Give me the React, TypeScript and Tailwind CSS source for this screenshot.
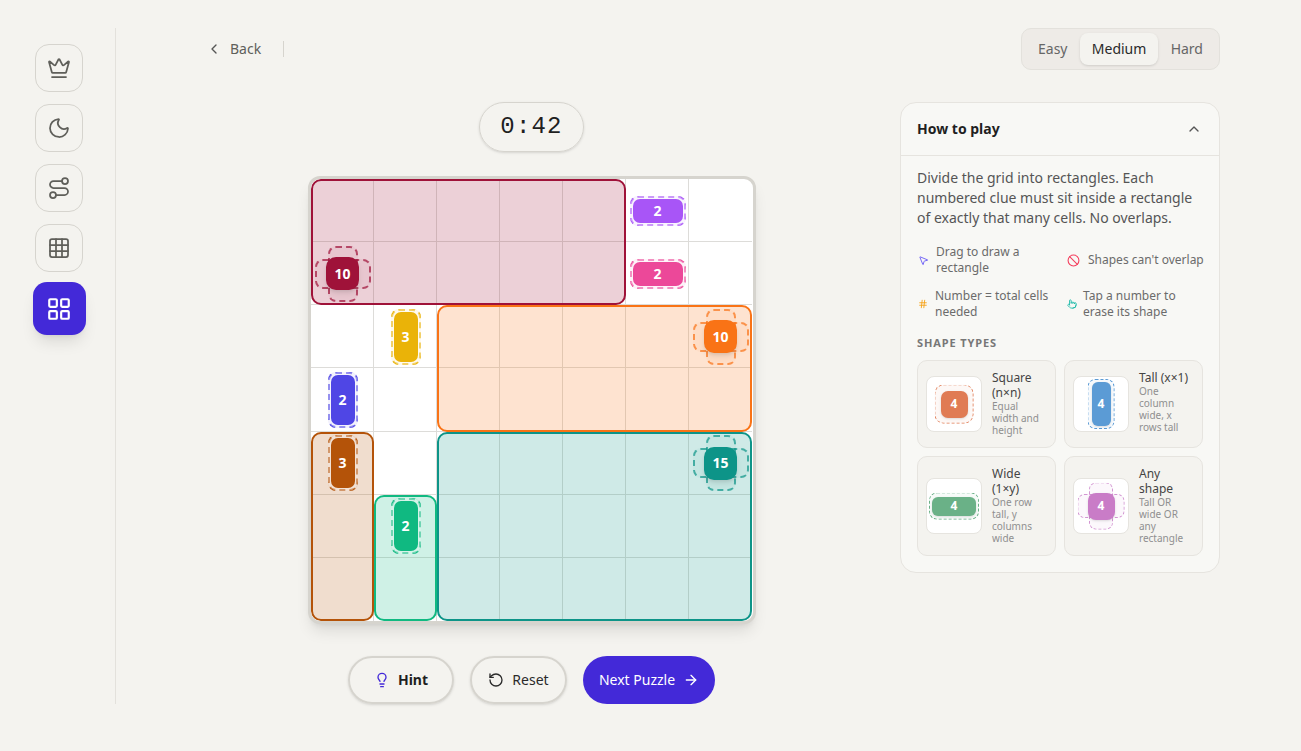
import {
  ArrowRight,
  Ban,
  ChevronLeft,
  ChevronUp,
  Crown,
  Grid3x3,
  Hash,
  LayoutGrid,
  Lightbulb,
  Moon,
  MousePointer2,
  Pointer,
  RotateCcw,
  Route,
} from "lucide-react";

const SIDE_ICONS = [Crown, Moon, Route, Grid3x3];

const REGIONS = [
  { pos: "col-start-1 col-span-5 row-start-1 row-span-2", color: "border-[#9f1239] bg-[#9f1239]/20" },
  { pos: "col-start-3 col-span-5 row-start-3 row-span-2", color: "border-[#f97316] bg-[#f97316]/20" },
  { pos: "col-start-3 col-span-5 row-start-5 row-span-3", color: "border-[#0d9488] bg-[#0d9488]/20" },
  { pos: "col-start-1 col-span-1 row-start-5 row-span-3", color: "border-[#b45309] bg-[#b45309]/20" },
  { pos: "col-start-2 col-span-1 row-start-6 row-span-2", color: "border-[#10b981] bg-[#10b981]/20" },
];

type Clue = {
  n: number;
  pos: string;
  kind: "wide" | "tall" | "any";
  bg: string;
  dash: string;
};

const CLUES: Clue[] = [
  { n: 2, pos: "col-start-6 row-start-1", kind: "wide", bg: "bg-[#a855f7]", dash: "border-[#a855f7] bg-[#a855f7]/10" },
  { n: 2, pos: "col-start-6 row-start-2", kind: "wide", bg: "bg-[#ec4899]", dash: "border-[#ec4899] bg-[#ec4899]/10" },
  { n: 10, pos: "col-start-1 row-start-2", kind: "any", bg: "bg-[#9f1239]", dash: "border-[#9f1239]/70 bg-[#9f1239]/5" },
  { n: 3, pos: "col-start-2 row-start-3", kind: "tall", bg: "bg-[#eab308]", dash: "border-[#eab308] bg-[#eab308]/10" },
  { n: 10, pos: "col-start-7 row-start-3", kind: "any", bg: "bg-[#f97316]", dash: "border-[#f97316]/70 bg-[#f97316]/5" },
  { n: 2, pos: "col-start-1 row-start-4", kind: "tall", bg: "bg-[#4f46e5]", dash: "border-[#4f46e5] bg-[#4f46e5]/10" },
  { n: 3, pos: "col-start-1 row-start-5", kind: "tall", bg: "bg-[#b45309]", dash: "border-[#b45309] bg-[#b45309]/10" },
  { n: 15, pos: "col-start-7 row-start-5", kind: "any", bg: "bg-[#0d9488]", dash: "border-[#0d9488]/70 bg-[#0d9488]/5" },
  { n: 2, pos: "col-start-2 row-start-6", kind: "tall", bg: "bg-[#10b981]", dash: "border-[#10b981] bg-[#10b981]/10" },
];

const CENTER = "absolute left-1/2 top-1/2 -translate-x-1/2 -translate-y-1/2";

const ClueBadge = ({ clue }: { clue: Clue }) => {
  const size =
    clue.kind === "wide"
      ? "w-[50px] h-[24px] rounded-[7px] ring-[3px] ring-white/40"
      : clue.kind === "tall"
        ? "w-[24px] h-[50px] rounded-[7px] ring-[3px] ring-white/40"
        : "w-[33px] h-[33px] rounded-[10px] shadow-md";
  return (
    <div className={`${clue.pos} relative flex items-center justify-center`}>
      {clue.kind !== "tall" && (
        <div className={`${CENTER} w-[56px] h-[30px] border-2 border-dashed rounded-[8px] ${clue.dash}`}></div>
      )}
      {clue.kind !== "wide" && (
        <div className={`${CENTER} w-[30px] h-[56px] border-2 border-dashed rounded-[8px] ${clue.dash}`}></div>
      )}
      <div className={`relative flex items-center justify-center text-white font-bold text-sm ${size} ${clue.bg}`}>
        {clue.n}
      </div>
    </div>
  );
};

const LEGEND = [
  { icon: <MousePointer2 className="w-[11px] h-[11px] text-[#6a5cf5]" />, text: "Drag to draw a rectangle", gap: "gap-[7px]" },
  { icon: <Ban className="w-[13px] h-[13px] text-[#f43f5e]" />, text: "Shapes can't overlap", gap: "gap-2" },
  { icon: <Hash className="w-[10px] h-[10px] text-[#f59e0b]" />, text: "Number = total cells needed", gap: "gap-[7px]" },
  { icon: <Pointer className="w-[10px] h-[10px] text-[#14b8a6]" />, text: "Tap a number to erase its shape", gap: "gap-[6px]" },
];

const SHAPES = [
  {
    title: "Square (n×n)",
    desc: "Equal width and height",
    color: "bg-[#e07b54]",
    outer: ["w-[39px] h-[39px] rounded-[9px] border-[#e07b54] bg-[#e07b54]/5"],
    inner: "w-[27px] h-[27px] rounded-[7px]",
  },
  {
    title: "Tall (x×1)",
    desc: "One column wide, x rows tall",
    color: "bg-[#5b9bd5]",
    outer: ["w-[27px] h-[50px] rounded-[8px] border-[#5b9bd5] bg-[#5b9bd5]/5"],
    inner: "w-[19px] h-[44px] rounded-[6px]",
  },
  {
    title: "Wide (1×y)",
    desc: "One row tall, y columns wide",
    color: "bg-[#6ab187]",
    outer: ["w-[50px] h-[27px] rounded-[8px] border-[#6ab187] bg-[#6ab187]/5"],
    inner: "w-[44px] h-[19px] rounded-[6px]",
  },
  {
    title: "Any shape",
    desc: "Tall OR wide OR any rectangle",
    color: "bg-[#c97cc7]",
    outer: [
      "w-[47px] h-[24px] rounded-[7px] border-[#c97cc7]/80 bg-[#c97cc7]/5",
      "w-[24px] h-[47px] rounded-[7px] border-[#c97cc7]/80 bg-[#c97cc7]/5",
    ],
    inner: "w-[27px] h-[27px] rounded-[8px]",
  },
];

const Board = () => {
  return (
    <div className="w-[448px] h-[448px] bg-white border-[3px] border-[#d6d4ce] rounded-[12px] shadow-lg overflow-hidden relative">
      <div className="grid grid-cols-[repeat(7,63px)] grid-rows-7 h-full">
        {Array.from({ length: 49 }).map((_, i) => (
          <div
            key={i}
            className={`border-[#dddcd9] ${i % 7 !== 6 ? "border-r" : ""} ${i < 42 ? "border-b" : ""}`}
          ></div>
        ))}
      </div>
      <div className="absolute inset-0 grid grid-cols-[repeat(7,63px)] grid-rows-7">
        {REGIONS.map((r) => (
          <div key={r.pos} className={`${r.pos} border-2 rounded-[10px] ${r.color}`}></div>
        ))}
      </div>
      <div className="absolute inset-0 grid grid-cols-[repeat(7,63px)] grid-rows-7">
        {CLUES.map((c) => (
          <ClueBadge key={c.pos} clue={c} />
        ))}
      </div>
    </div>
  );
};

const HowToPlay = () => {
  return (
    <aside className="w-[320px] h-[471px] bg-[#f8f8f5] border border-[#e6e4df] rounded-[16px] shrink-0">
      <div className="h-[53px] px-4 flex items-center justify-between border-b border-[#e6e4df]">
        <span className="text-sm font-bold text-[#1f1f1f]">How to play</span>
        <ChevronUp className="w-4 h-4 text-[#555] mr-[1px]" />
      </div>
      <div className="px-4 pt-3">
        <p className="text-sm leading-5 text-[#555]">
          Divide the grid into rectangles. Each numbered clue must sit inside a rectangle of exactly that many cells. No
          overlaps.
        </p>
        <div className="grid grid-cols-[149px_1fr] gap-y-3 mt-4">
          {LEGEND.map((l) => (
            <div key={l.text} className={`flex items-center ${l.gap} text-xs leading-4 text-[#6b6b6b]`}>
              <span className="shrink-0 ml-[1px]">{l.icon}</span>
              <span className="w-[120px]">{l.text}</span>
            </div>
          ))}
        </div>
        <div className="mt-[15px] text-[11px] leading-4 font-bold tracking-[0.08em] text-[#777]">SHAPE TYPES</div>
        <div className="grid grid-cols-2 gap-2 mt-[9px]">
          {SHAPES.map((s) => (
            <div
              key={s.title}
              className="flex items-center gap-[10px] pl-2 pr-2 py-[10px] bg-[#f4f3ef] border border-[#e6e4df] rounded-[10px]"
            >
              <div className="w-[56px] h-[56px] shrink-0 bg-white border border-[#e6e4df] rounded-[8px] relative flex items-center justify-center">
                {s.outer.map((o) => (
                  <div key={o} className={`${CENTER} border border-dashed ${o}`}></div>
                ))}
                <div
                  className={`relative flex items-center justify-center text-white text-xs font-bold shadow-sm ${s.color} ${s.inner}`}
                >
                  4
                </div>
              </div>
              <div className="min-w-0 self-start -mt-px mb-px">
                <div className="text-xs leading-[15px] text-[#444]">{s.title}</div>
                <div className="text-[10px] leading-3 text-[#8f8f8f]">{s.desc}</div>
              </div>
            </div>
          ))}
        </div>
      </div>
    </aside>
  );
};

export default function App() {
  return (
    <div className="min-h-[751px] bg-[#f4f3ef] font-['Noto_Sans',sans-serif] flex py-7">
      <nav className="w-[116px] h-[676px] shrink-0 border-r border-[#e3e1dc] flex flex-col items-center pt-4 pl-[3px] gap-3">
        {SIDE_ICONS.map((Icon, i) => (
          <button
            key={i}
            className="w-12 h-12 flex items-center justify-center rounded-[14px] border border-[#d6d4ce] text-[#5f5f5a]"
          >
            <Icon className="w-6 h-6" strokeWidth={1.75} />
          </button>
        ))}
        <button className="w-[53px] h-[53px] -mt-[2px] flex items-center justify-center rounded-[14px] bg-[#4329d8] text-white shadow-lg">
          <LayoutGrid className="w-[26px] h-[26px]" />
        </button>
      </nav>
      <main className="flex-1 flex flex-col pl-[90px] pr-[81px]">
        <div className="h-[42px] flex items-center justify-between">
          <div className="flex items-center">
            <ChevronLeft className="w-4 h-4 text-[#555]" />
            <span className="ml-2 text-sm text-[#5f5f5a]">Back</span>
            <span className="ml-[22px] w-px h-4 bg-[#d6d4ce]"></span>
          </div>
          <div className="h-[42px] w-[199px] flex items-center justify-between px-1 bg-[#eeebe7] border border-[#e3e1dc] rounded-[10px]">
            <span className="px-3 text-sm text-[#666]">Easy</span>
            <span className="h-8 w-[78px] flex items-center justify-center text-sm text-[#2a2a2a] bg-[#f4f3ef] rounded-[8px] shadow-sm">
              Medium
            </span>
            <span className="px-3 text-sm text-[#666]">Hard</span>
          </div>
        </div>
        <div className="flex justify-between">
          <div className="w-[448px] ml-[102px] flex flex-col items-center">
            <div className="mt-8 mr-px h-[50px] w-[105px] flex items-center justify-center rounded-full border border-[#d6d4ce] shadow-sm font-['Liberation_Mono',monospace] text-2xl tracking-[0.05em] text-[#1f1f1f]">
              0:42
            </div>
            <div className="mt-6">
              <Board />
            </div>
            <div className="mt-8 mr-px flex items-center gap-4">
              <button className="w-[106px] h-12 flex items-center justify-center gap-2 rounded-full border-2 border-[#d6d4ce] shadow-sm text-sm font-bold text-[#1f1f1f]">
                <Lightbulb className="w-4 h-4 text-[#4329d8]" />
                Hint
              </button>
              <button className="w-[97px] h-12 flex items-center justify-center gap-2 rounded-full border-2 border-[#d6d4ce] shadow-sm text-sm text-[#2a2a2a]">
                <RotateCcw className="w-4 h-4" />
                Reset
              </button>
              <button className="w-[132px] h-12 flex items-center justify-center gap-2 rounded-full bg-[#4329d8] text-sm text-white">
                Next Puzzle
                <ArrowRight className="w-4 h-4" />
              </button>
            </div>
          </div>
          <div className="mt-8">
            <HowToPlay />
          </div>
        </div>
      </main>
    </div>
  );
}
